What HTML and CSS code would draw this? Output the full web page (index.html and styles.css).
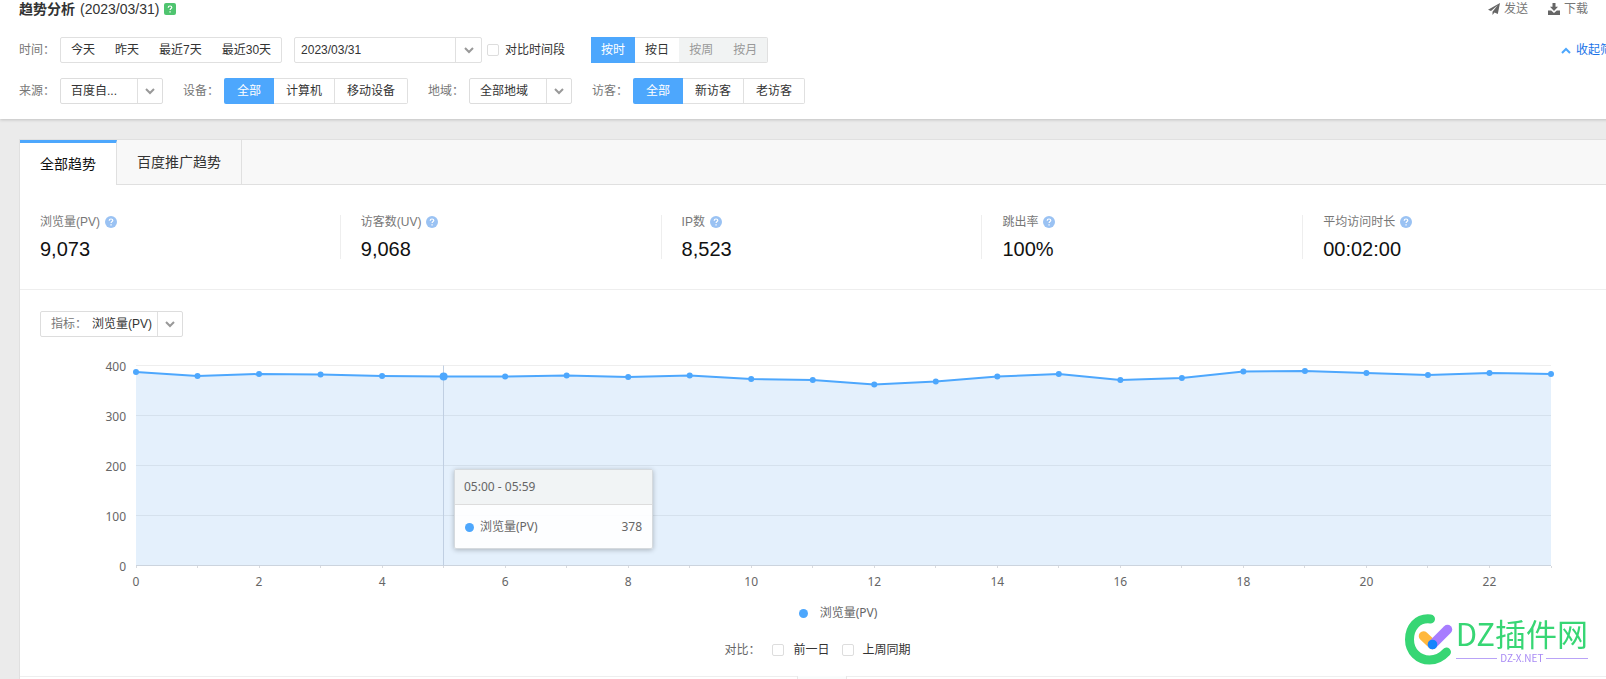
FILE: index.html
```html
<!DOCTYPE html>
<html lang="zh-CN">
<head>
<meta charset="utf-8">
<title>趋势分析</title>
<link rel="stylesheet" href="styles.css">
</head>
<body>
<svg class="defs" aria-hidden="true">
  <symbol id="chev" viewBox="0 0 10 7"><path d="M1 1l4 4 4-4" fill="none" stroke="currentColor" stroke-width="2"/></symbol>
  <symbol id="help" viewBox="0 0 12 12"><path d="M4.2 4.7C4.2 3.500 5 3 6 3s1.800.6 1.800 1.500C7.800 5.600 6.100 5.600 6.100 7" fill="none" stroke="#fff" stroke-width="1.200"/><path d="M5.400 8.200h1.300v1.300H5.400z" fill="#fff"/></symbol>
</svg>
<div class="page">
  <header class="top">
    <div class="title-row">
      <h1 class="title">趋势分析</h1>
      <span class="date">(2023/03/31)</span>
      <svg class="badge"><use href="#help"/></svg>
      <nav class="actions">
        <a class="action" href="#send"><svg class="action-icon" viewBox="0 0 12 12"><path d="M12 0L0 6.800l3 1.300L9.700 2.300 4.500 8.800V12l2-2.400 3.300 1.400z"/></svg>发送</a>
        <a class="action" href="#download"><svg class="action-icon" viewBox="0 0 12 12"><path d="M4.500 0h3v3.800H10L6 8 2 3.800h2.500zM0 7.500h3.200L6 10l2.800-2.500H12V12H0z"/></svg>下载</a>
      </nav>
    </div>
    <div class="filters">
      <span class="label">时间：</span>
      <div class="box">
        <button class="seg">今天</button><button class="seg">昨天</button><button class="seg">最近7天</button><button class="seg">最近30天</button>
      </div>
      <button class="datepick"><span class="datepick-text">2023/03/31</span><span class="arrow"><svg class="chev"><use href="#chev"/></svg></span></button>
      <label class="check compare-range"><input class="tick" type="checkbox">对比时间段</label>
      <div class="box units">
        <button class="seg on">按时</button><button class="seg">按日</button><button class="seg" disabled>按周</button><button class="seg" disabled>按月</button>
      </div>
      <a class="collapse" href="#filters"><svg class="chev up"><use href="#chev"/></svg>收起筛选</a>
    </div>
    <div class="filters">
      <label class="label" for="source">来源：</label>
      <div class="drop"><select class="select" id="source"><option>百度自...</option></select><span class="arrow"><svg class="chev"><use href="#chev"/></svg></span></div>
      <span class="label next">设备：</span>
      <div class="group"><button class="opt on">全部</button><button class="opt">计算机</button><button class="opt">移动设备</button></div>
      <label class="label next" for="region">地域：</label>
      <div class="drop"><select class="select" id="region"><option>全部地域</option></select><span class="arrow"><svg class="chev"><use href="#chev"/></svg></span></div>
      <span class="label next">访客：</span>
      <div class="group"><button class="opt on">全部</button><button class="opt">新访客</button><button class="opt">老访客</button></div>
    </div>
  </header>
  <main class="card">
    <div class="tabs"><button class="tab current">全部趋势</button><button class="tab">百度推广趋势</button></div>
    <section class="stats">
      <div class="stat"><div class="stat-name">浏览量(PV)<svg class="help"><use href="#help"/></svg></div><div class="stat-value">9,073</div></div>
      <div class="stat"><div class="stat-name">访客数(UV)<svg class="help"><use href="#help"/></svg></div><div class="stat-value">9,068</div></div>
      <div class="stat"><div class="stat-name">IP数<svg class="help"><use href="#help"/></svg></div><div class="stat-value">8,523</div></div>
      <div class="stat"><div class="stat-name">跳出率<svg class="help"><use href="#help"/></svg></div><div class="stat-value">100%</div></div>
      <div class="stat"><div class="stat-name">平均访问时长<svg class="help"><use href="#help"/></svg></div><div class="stat-value">00:02:00</div></div>
    </section>
    <section class="trend">
      <div class="metric drop"><label class="metric-label" for="metric">指标：</label><select class="select" id="metric"><option>浏览量(PV)</option></select><span class="arrow"><svg class="chev"><use href="#chev"/></svg></span></div>
      <div class="chart">
        <svg class="plot" id="plot" role="img" aria-label="浏览量(PV)"></svg>
        <div class="tip" id="tip">
          <div class="tip-head">05:00 - 05:59</div>
          <div class="tip-body"><i class="dot"></i>浏览量(PV)<span class="tip-num">378</span></div>
        </div>
      </div>
      <div class="legend"><i class="dot"></i>浏览量(PV)</div>
      <div class="compare">
        <span class="compare-label">对比：</span>
        <label class="check"><input class="tick" type="checkbox">前一日</label>
        <label class="check"><input class="tick" type="checkbox">上周同期</label>
      </div>
      <button class="handle" aria-label="展开"></button>
    </section>
  </main>
</div>
<div class="mark">
  <svg class="mark-icon" viewBox="0 0 48 52"><path d="M25.500 5C12 3.500 4.500 14 4.500 25.500c0 12 9 20.500 20 20.500 7 0 12-2.500 17-8" fill="none" stroke="#37d674" stroke-width="9" stroke-linecap="round"/><path d="M18.500 22l9 8.500" stroke="#ffb83d" stroke-width="9.500" stroke-linecap="round"/><path d="M27.500 30.500l15-15" stroke="#a77dff" stroke-width="9.500" stroke-linecap="round"/><circle cx="27.500" cy="30.500" r="4.800" fill="#1684fc"/></svg>
  <div class="mark-words"><div class="mark-name">DZ插件网</div><div class="mark-site">DZ-X.NET</div></div>
</div>
<script src="chart.js"></script>
</body>
</html>
```
FILE: styles.css
```css
* { box-sizing: border-box; }
html { height: 100%; overflow: hidden auto; }
body {
  margin: 0;
  min-height: 100%;
  display: flex;
  background: #ebebeb;
  color: #333;
  font: 12px/20px "Liberation Sans", "Noto Sans CJK SC", sans-serif;
}
button, select, input { font: inherit; color: inherit; margin: 0; padding: 0; border: 0; background: none; }
a { text-decoration: none; }
.defs { position: absolute; width: 0; height: 0; }

/* The report runs slightly past the right edge of the window. */
.page { flex: none; width: calc(100% + 39px); display: flex; flex-direction: column; }

.top { background: #fff; padding: 0 21px 15px 19px; box-shadow: 0 1px 3px rgba(0, 0, 0, .18); }
.title-row { display: flex; align-items: center; height: 18px; margin-bottom: 19px; }
.title { margin: 0 5px 0 0; font-size: 14px; line-height: 18px; }
.date { font-size: 14px; line-height: 18px; }
.badge { width: 12px; height: 12px; margin-left: 5px; background: #4fc46f; border-radius: 2px; }
.actions { display: flex; gap: 20px; margin: 0 36px 0 auto; }
.action { display: flex; align-items: center; gap: 4px; color: #777; line-height: 18px; }
.action-icon { width: 12px; height: 12px; fill: #666; }

.filters { display: flex; align-items: center; height: 26px; }
.filters + .filters { margin-top: 15px; }
.label { width: 36px; margin-right: 5px; color: #777; white-space: nowrap; }
.label.next { margin-left: 20px; }
.box { display: flex; height: 26px; border: 1px solid #e0e0e0; border-radius: 2px; }
.seg { padding: 0 10px; }
.seg:disabled { background: #f1f3f3; color: #999; }
.seg.on, .opt.on { background: #4da7fd; color: #fff; }
.units { margin-left: 26px; border-left: 0; }
.units .on { margin: -1px 0; }
.datepick { display: flex; align-items: center; width: 188px; height: 26px; margin: 0 5px 0 12px; border: 1px solid #e0e0e0; border-radius: 2px; }
.datepick-text { flex: 1; padding-left: 6px; text-align: left; }
.arrow { display: flex; align-items: center; justify-content: center; width: 25px; height: 24px; border-left: 1px solid #e0e0e0; color: #999; pointer-events: none; }
.datepick .arrow { width: 26px; }
.chev { width: 10px; height: 7px; }
.up { transform: rotate(180deg); }
.check { display: flex; align-items: center; }
.tick { appearance: none; width: 12px; height: 12px; border: 1px solid #ddd; border-radius: 2px; background: #fff; margin-right: 9px; }
.compare-range .tick { margin-right: 6px; }
.collapse { display: flex; align-items: center; gap: 5px; margin-left: auto; color: #1a73e8; }
.collapse .chev { color: #4da7fd; }

.drop { display: flex; height: 26px; border: 1px solid #ddd; border-radius: 2px; background: #fff; }
.select { appearance: none; width: 76px; padding-left: 10px; outline: 0; }
.group { display: flex; height: 26px; }
.opt { padding: 0 12px; border: solid #e0e0e0; border-width: 1px 1px 1px 0; }
.opt.on { padding: 0 13px; border: 0; border-radius: 2px 0 0 2px; }
.opt:last-child { border-radius: 0 2px 2px 0; }

.card { flex: 1; margin: 20px 20px 0 19px; border: solid #e0e0e0; border-width: 1px 1px 0; background: #fff; display: flex; flex-direction: column; }
.tabs { display: flex; height: 45px; background: #f8f8f8; border-bottom: 1px solid #e0e0e0; }
.tab { padding: 0 20px; border-right: 1px solid #e0e0e0; font-size: 14px; }
.tab.current { background: #fff; border-top: 3px solid #4da7fd; margin-bottom: -1px; color: #111; }

.stats { display: grid; grid-template-columns: repeat(5, 1fr); padding: 30px 0; border-bottom: 1px solid #eee; }
.stat { height: 44px; padding-left: 20px; border-right: 1px solid #eee; }
.stat:last-child { border-right: 0; }
.stat-name { display: flex; align-items: center; height: 14px; color: #777; }
.help { width: 12px; height: 12px; margin-left: 5px; border-radius: 6px; background: #9ac2f3; }
.stat-value { margin-top: 8px; font-size: 20px; line-height: 24px; color: #111; }

.trend { flex: 1; display: flex; flex-direction: column; padding-top: 21px; background: linear-gradient(#eee, #eee) 0 calc(100% - 2px) / 100% 1px no-repeat; }
.metric { align-self: flex-start; margin-left: 20px; }
.metric-label { padding: 2px 0 0 10px; width: 51px; color: #777; }
.metric .select { width: 65px; padding: 0; }
.chart, .legend, .tip { font-family: "Noto Sans", "Noto Sans CJK SC", sans-serif; }
.chart { position: relative; margin-top: 14px; }
.plot { display: block; width: 100%; height: 242px; }
.plot text { font-size: 12px; fill: #666; }
.grid { stroke: #eee; }
.axis { stroke: #d8dade; }
.area { fill: rgba(77, 157, 233, .15); }
.hover { stroke: #c0cfe2; }
.line { fill: none; stroke: #4da7fd; stroke-width: 2; }
.point { fill: #4da7fd; }
.tip { position: absolute; top: 118px; width: 199px; border: 1px solid #d5dade; border-radius: 2px; background: rgba(255, 255, 255, .9); box-shadow: 0 1px 5px rgba(0, 0, 0, .25); color: #666; }
.tip-head { padding: 7px 9px; border-bottom: 1px solid #ddd; background: #f1f4f5; }
.tip-body { display: flex; align-items: center; padding: 12px 10px 11px; }
.tip-num { margin-left: auto; }
.dot { width: 9px; height: 9px; border-radius: 5px; background: #4da7fd; }
.tip .dot { margin-right: 6px; }
.legend { display: flex; align-items: center; justify-content: center; gap: 12px; margin: 10px 0 17px; padding-left: 32px; color: #666; }
.compare { display: flex; justify-content: center; gap: 12px; padding-right: 9px; }
.compare-label { color: #666; }
.handle { align-self: center; width: 50px; height: 3px; margin-top: 16px; border: solid #e8e8e8; border-width: 0 1px; background: #fafcfc; }

.mark { position: fixed; right: 18px; bottom: 13px; display: flex; gap: 3px; }
.mark-icon { width: 48px; height: 52px; }
.mark-name { font: 400 31px/38px "Noto Sans CJK SC", sans-serif; color: #37d674; }
.mark-site { display: flex; align-items: center; gap: 3px; font: 10px/12px "Noto Sans CJK SC", sans-serif; color: #a98bf5; }
.mark-site::before, .mark-site::after { content: ""; flex: 1; height: 1px; background: #b9a3f7; }
```
FILE: chart.js
```javascript
const values = [387, 379, 383, 382, 379, 378, 378, 380, 377, 380, 373, 371,
  362, 368, 378, 383, 371, 375, 388, 389, 385, 381, 385, 383];
const active = 5;
const plot = document.getElementById('plot');
const tip = document.getElementById('tip');

function draw() {
  const left = 116;
  const right = plot.clientWidth - 73;
  const x = i => left + (right - left) * i / (values.length - 1);
  const snap = i => Math.floor(x(i)) + 0.5;
  const y = v => 214.5 - v / 2;
  let out = '';
  for (let v = 0; v <= 400; v += 100) {
    out += `<line class="${v ? 'grid' : 'axis'}" x1="${left}" x2="${right}" y1="${y(v)}" y2="${y(v)}"/>`;
    out += `<text x="${left - 10}" y="${y(v) + 5}" text-anchor="end">${v}</text>`;
  }
  const pts = values.map((v, i) => `${x(i)},${y(v)}`).join(' ');
  out += `<polygon class="area" points="${left},${y(0)} ${pts} ${right},${y(0)}"/>`;
  out += `<line class="hover" x1="${snap(active)}" x2="${snap(active)}" y1="${y(400)}" y2="${y(0)}"/>`;
  out += `<polyline class="line" points="${pts}"/>`;
  values.forEach((v, i) => {
    out += `<line class="axis" x1="${snap(i)}" x2="${snap(i)}" y1="215" y2="217"/>`;
    out += `<circle class="point" cx="${x(i)}" cy="${y(v)}" r="${i === active ? 4 : 3}"/>`;
    if (i % 2 === 0) out += `<text x="${x(i)}" y="235" text-anchor="middle">${i}</text>`;
  });
  plot.innerHTML = out;
  tip.style.left = `${Math.round(x(active)) + 10}px`;
}

draw();
window.addEventListener('resize', draw);
```
